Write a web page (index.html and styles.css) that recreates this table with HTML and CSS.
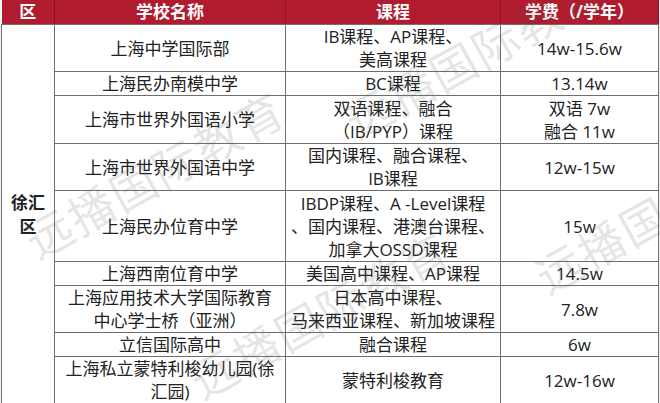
FILE: index.html
```html
<!DOCTYPE html>
<html lang="zh">
<head>
<meta charset="utf-8">
<link rel="stylesheet" href="styles.css">
</head>
<body>
<div class="sheet">
<table class="fees">
  <colgroup>
    <col class="c-area"><col class="c-school"><col class="c-course"><col class="c-fee">
  </colgroup>
  <thead>
    <tr class="head"><th>区</th><th>学校名称</th><th>课程</th><th>学费（/学年）</th></tr>
  </thead>
  <tbody>
    <tr class="r2"><td class="area" rowspan="9">徐汇<br>区</td><td>上海中学国际部</td><td>IB课程、AP课程、<br>美高课程</td><td>14w-15.6w</td></tr>
    <tr class="r1"><td>上海民办南模中学</td><td>BC课程</td><td>13.14w</td></tr>
    <tr class="r2b"><td>上海市世界外国语小学</td><td>双语课程、融合<br>（IB/PYP）课程</td><td>双语 7w<br>融合 11w</td></tr>
    <tr class="r2c"><td>上海市世界外国语中学</td><td>国内课程、融合课程、<br>IB课程</td><td>12w-15w</td></tr>
    <tr class="r3"><td>上海民办位育中学</td><td>IBDP课程、A -Level课程<br>、国内课程、港澳台课程、<br>加拿大OSSD课程</td><td>15w</td></tr>
    <tr class="r1"><td>上海西南位育中学</td><td>美国高中课程、AP课程</td><td>14.5w</td></tr>
    <tr class="r2"><td>上海应用技术大学国际教育<br>中心学士桥（亚洲）</td><td>日本高中课程、<br>马来西亚课程、新加坡课程</td><td>7.8w</td></tr>
    <tr class="r1"><td>立信国际高中</td><td>融合课程</td><td>6w</td></tr>
    <tr class="r2"><td>上海私立蒙特利梭幼儿园(徐<br>汇园)</td><td>蒙特利梭教育</td><td>12w-16w</td></tr>
  </tbody>
</table>
<div class="wm wm1">远播国际教育</div>
<div class="wm wm2">远播国际教育</div>
<div class="wm wm3">远播国际教育</div>
<div class="wm wm4">远播国际教育</div>
</div>
</body>
</html>
```

FILE: styles.css
```css
html, body {
  margin: 0;
  padding: 0;
  background: #f3f3f3;
}
.sheet {
  position: relative;
  width: 660px;
  height: 403px;
  overflow: hidden;
  background: #f3f3f3;
}
.fees {
  margin-left: 1px;
  border-collapse: collapse;
  table-layout: fixed;
  width: 657px;
  font-family: "Open Sans", "Noto Sans CJK SC", sans-serif;
  font-size: 17px;
  color: #222;
  background: #fff;
}
.c-area { width: 53px; }
.c-school { width: 231px; }
.c-course { width: 215px; }
.c-fee { width: 158px; }
.fees th {
  background: #b01b2f;
  color: #fff;
  font-weight: 700;
  height: 24px;
  padding: 0;
  line-height: 22px;
  border-left: 1px solid #8c1424;
  border-right: 1px solid #8c1424;
  border-top: 0;
  border-bottom: 1px solid #7a6a6a;
}
.fees th:first-child { border-left: 0; }
.fees td {
  border: 1px solid #6e6e6e;
  text-align: center;
  vertical-align: middle;
  padding: 0;
  line-height: 23px;
  white-space: nowrap;
}
.fees td.area {
  font-weight: 700;
  line-height: 24px;
  padding-top: 2px;
}
.r1 { height: 23px; }
.r2 { height: 47px; }
.r2b { height: 48px; }
.r2c { height: 46px; }
.r3 { height: 71px; }
.wm {
  position: absolute;
  font-family: "Noto Sans CJK SC", sans-serif;
  font-size: 46px;
  color: rgba(90, 90, 90, 0.16);
  white-space: nowrap;
  transform: rotate(-29deg);
  transform-origin: center;
  pointer-events: none;
  letter-spacing: 2px;
}
.wm1 { left: 10px; top: 140px; }
.wm2 { left: 330px; top: 20px; }
.wm3 { left: 175px; top: 280px; }
.wm4 { left: 520px; top: 175px; }
```
